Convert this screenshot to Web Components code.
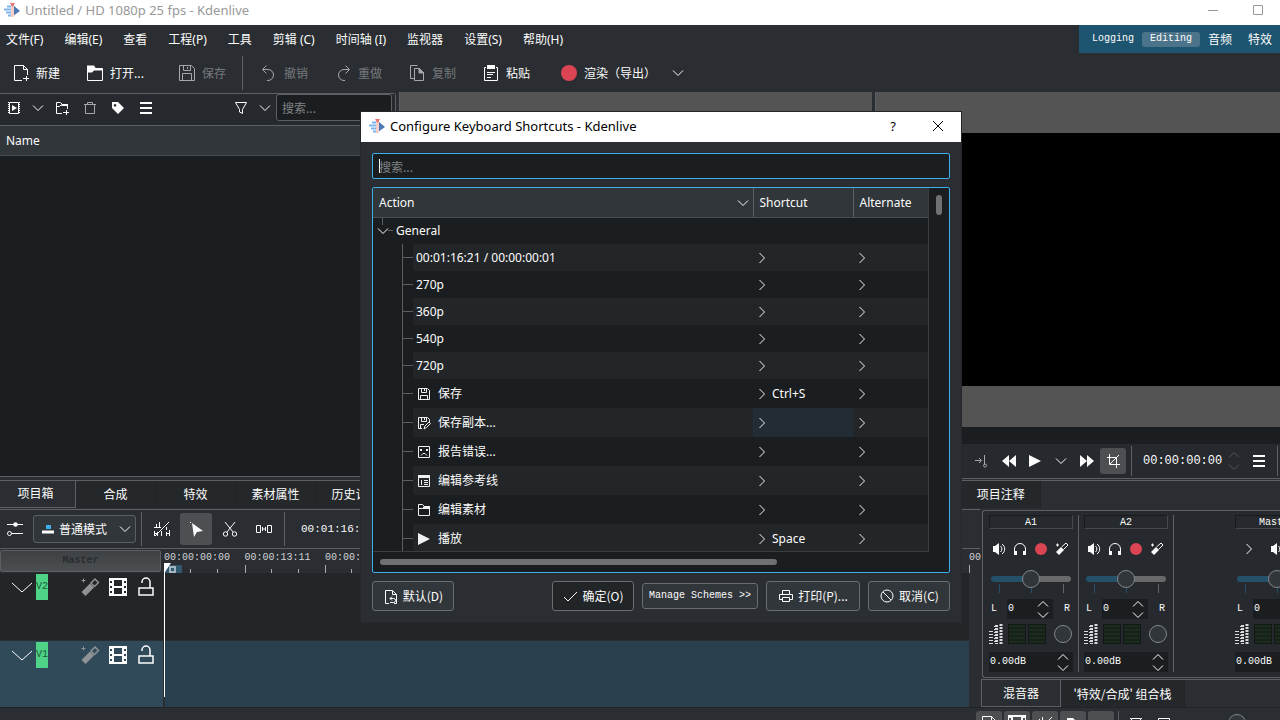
<!DOCTYPE html>
<html lang="zh-CN">
<head>
<meta charset="utf-8">
<title>Untitled / HD 1080p 25 fps - Kdenlive</title>
<style>
    :root {
        --window: #2a2e32;
        --panel: #26292d;
        --view: #1b1e20;
        --alt: #232629;
        --header: #31363b;
        --line: #5c6063;
        --text: #fcfcfc;
        --dim: #76797c;
        --accent: #3daee9;
        --ui: "Noto Sans", "Noto Sans CJK SC", sans-serif;
        --cjk: "Noto Sans CJK SC", sans-serif;
        --mono: "Liberation Mono", "Noto Sans CJK SC", monospace;
    }

    html, body {
        margin: 0;
        height: 100%;
    }

    body {
        overflow: hidden;
        background: var(--window);
        color: var(--text);
        font: 12px/16px var(--ui);
    }
</style>
</head>
<body>
<kd-app></kd-app>

<script>
'use strict';

(function() {
    const icons = {
        app: '<path d="M3 4.500h5M0 7.500h7M2 10.500h6M4 13.500h4" stroke="#7fb4f0" stroke-width="2"/><path d="M9 3l7 6-7 5z" fill="#4a79b5" stroke="none"/><path d="M8.500 4v11" stroke="#f8cdc8" stroke-width="3"/><path d="M6 1h5l-2.500 4z" fill="#ee6f6a" stroke="none"/>',
        newfile: '<path d="M9 15.500H1.500V.500h9l4 4V10M10.500.500v4h4M10 13.500h6M13.500 11v5"/>',
        open: '<path d="M.500 2v13.500h15V3.500H8L6 5.500H.500"/><path d="M0 .500h7l2 3h7v2H7l-2 2H0z" fill="currentColor" stroke="none"/>',
        folderopen: '<path d="M2.500 13.500v-11h4l2 2h5v9zM2.500 6.500h4l2-2"/><path d="M8 4h6v3H6z" fill="currentColor" stroke="none"/>',
        save: '<path d="M.500.500h12l3 3v12H.500zM4.500.500v5h7v-5M8.500 2v2M3.500 15.500v-7h9v7"/>',
        savesmall: '<path d="M2.500 2.500h9l2 2v9h-11zM5.500 2.500v4h5v-4M8.500 3v2M4.500 13.500v-4h7v4"/>',
        savecopy: '<path d="M6 13.500H2.500v-11h9l2 2V7M5.500 2.500v4h5v-4M8.500 3v2M4.500 13.500v-4H8M8 14l1-3 4-4 1.500 1.500-4 4z"/>',
        undo: '<path d="M5.500.500l-4 4 4 4M2 4.500h5a5 5 0 0 1 0 11H6"/>',
        redo: '<path d="M10.500.500l4 4-4 4M14 4.500H9a5 5 0 0 0 0 11h1"/>',
        copy: '<path d="M5 13.500H1.500v-13h7M5.500 3.500h5l4 4v8h-9z"/><path d="M10 3l5 5h-5z" fill="currentColor"/>',
        paste: '<path d="M3 2.500H1.500v13h13v-13H13M4 7.500h8M4 9.500h6M4 12.500h4"/><path d="M4 0h8v4H4z" fill="currentColor" stroke="none"/>',
        record: '<circle cx="8" cy="8" r="8" fill="#da4453" stroke="none"/>',
        recordsmall: '<circle cx="8" cy="8" r="6" fill="#da4453" stroke="none"/>',
        down: '<path d="M3 5.500l5 5 5-5"/>',
        right: '<path d="M5.500 3l5 5-5 5"/>',
        up: '<path d="M3 10.500l5-5 5 5"/>',
        bigdown: '<path d="M-2 4l10 9 10-9"/>',
        clip: '<path d="M3.500 2.500h9v11h-9z"/><path d="M2.500 2v12M13.500 2v12" stroke-dasharray="1 1"/><path d="M6 5l5 3-5 3z" fill="currentColor" stroke="none"/>',
        addclip: '<path d="M8 13.500H2.500v-11h4l2 2h5V9M2.500 6.500h3l2-2M9 12.500h6M12.500 10v5"/><path d="M8 4h6v2H7z" fill="currentColor" stroke="none"/>',
        trash: '<path d="M2 4.500h12M5.500 4.500v-2h5v2M3.500 5v8.500h9V5"/>',
        tag: '<path d="M2 2h6l6 6-6 6-6-6zM5 4a1.300 1.300 0 1 0 .1 0z" fill="currentColor" fill-rule="evenodd" stroke="none"/>',
        menu: '<path d="M2 3h12M2 8h12M2 13h12" stroke-width="2"/>',
        filter: '<path d="M2.500 2.500h11l-4 7v4l-3-1.500V9.500z"/>',
        report: '<path d="M2.500 2.500h11v11h-11zM5 11.500l2-2h2l2 2"/><path d="M4 5h2v2H4zM10 5h2v2h-2z" fill="currentColor" stroke="none"/>',
        guides: '<path d="M2.500 3.500h11v10h-11zM5.500 7v5M8 7.500h4M8 9.500h4M8 11.500h4"/><path d="M2 2h12v3H2z" fill="currentColor" stroke="none"/>',
        play: '<path d="M2 2l12 6-12 6z" fill="currentColor" stroke="none"/>',
        back: '<path d="M8 2v12L1 8zM15 2v12L8 8z" fill="currentColor" stroke="none"/>',
        forward: '<path d="M8 2v12l7-6zM1 2v12l7-6z" fill="currentColor" stroke="none"/>',
        zonein: '<path d="M0 7.500h6M4 5l2.500 2.500L4 10M9.500 2v10"/><circle cx="10" cy="12.500" r="1.500"/>',
        crop: '<path d="M2 4.500h9.500V15M4.500 1v10.500H15M5 11l9-9"/>',
        reset: '<path d="M6 15.500H2.500v-13h7l4 4v9H11M9.500 2.500v4h4M7 10.500h3.500a2 2 0 0 1 0 4H7M9 8.500l-2 2 2 2"/>',
        ok: '<path d="M2 9l4 4 9-9"/>',
        print: '<path d="M4.500 6V2.500h7V6M4 11.500H1.500v-5h13v5H12M4.500 9.500h7v4h-7z"/>',
        cancel: '<circle cx="8" cy="8" r="6"/><path d="M4 4l8 8"/>',
        mix: '<path d="M0 3.500h16M4 12.500h12"/><circle cx="8.500" cy="3.500" r="2.300" fill="currentColor" stroke="none"/><circle cx="2.500" cy="12.500" r="2"/>',
        normal: '<path d="M2 11h12" stroke-width="3"/><path d="M6 4h5v4H6z" fill="#3daee9" stroke="none"/>',
        noripple: '<path d="M0 6.500h7M2.500 7V3M5.500 7V1M.500 15v-5M3.500 15v-4M12.500 6V9M15.500 9v6M12.500 11v4M7.500 10v5M1 15L15 1M0 12.500h4M12 12.500h4"/>',
        select: '<path d="M4 2l11 8-6 1-3 5z" fill="currentColor" stroke="none"/><path d="M2 1.500h1"/>',
        scissors: '<path d="M3 1l8 10M13 1L5 11"/><circle cx="3.500" cy="13" r="2.200"/><circle cx="12.500" cy="13" r="2.200"/>',
        spacer: '<path d="M.500 4.500h4v7h-4zM11.500 4.500h4v7h-4zM6 8h4M6.500 6v4M9.500 6v4"/>',
        wand: '<path d="M-.500 13L8 4.500l4 4L3.500 17z" fill="currentColor" stroke="none"/><path d="M9 4l4-4 3.500 3.500-4 4z" stroke-width="1.500"/><path d="M-.500 1.500h4M1.500-.500v4"/>',
        film: '<path d="M-1-1h18v18H-1zM4 1v6h8V1zM4 9v6h8V9zM0 2v2h2V2zM0 7v2h2V7zM0 12v2h2v-2zM14 2v2h2V2zM14 7v2h2V7zM14 12v2h2v-2z" fill="currentColor" fill-rule="evenodd" stroke="none"/>',
        unlock: '<path d="M1 9h14v7H1zM4 4V3a3.500 3.500 0 0 1 8 0v6" stroke-width="1.500"/>',
        speaker: '<path d="M2 5h2l4-3v12l-4-3H2z" fill="currentColor" stroke="none"/><path d="M9.500 5a4 4 0 0 1 0 6M11 3a6 6 0 0 1 0 10"/>',
        phones: '<path d="M2.500 13V8a5.500 5.500 0 0 1 11 0v5"/><path d="M2 10h3v4H2zM11 10h3v4h-3z" fill="currentColor" stroke="none"/>',
        smallwand: '<path d="M2 11l5-5 3 3-5 5z" fill="currentColor" stroke="none"/><path d="M7.500 6L12 2l2 2-4.500 4.500M2 4h3M3.500 2.500v3"/>',
        minimize: '<path d="M3 8.500h10"/>',
        maximize: '<path d="M3.500 3.500h9v9h-9z"/>',
        close: '<path d="M3 3l10 10M13 3L3 13"/>'
    };

    const base = `
        *, *::before { box-sizing: border-box; }
        button, input, select {
            margin: 0;
            padding: 0;
            border: 0;
            border-radius: 0;
            background: none;
            color: inherit;
            font: inherit;
            outline: none;
        }
        input { min-width: 0; }
        input::placeholder { color: #7f8285; opacity: 1; }
        button { display: flex; align-items: center; justify-content: center; white-space: nowrap; }
    `;

    class KdElement extends HTMLElement {
        constructor() {
            super();
            this.attachShadow({ mode: 'open' });
        }

        connectedCallback() {
            this.shadowRoot.innerHTML = `<style>${base}${this.styles}</style>${this.markup}`;
        }
    }

    class KdIcon extends KdElement {
        get styles() {
            return `
                :host { display: inline-flex; flex: none; width: 16px; height: 16px; }
                svg { width: 16px; height: 16px; fill: none; stroke: currentColor; overflow: visible; }
            `;
        }

        get markup() {
            return `<svg viewBox="0 0 16 16" aria-hidden="true">${icons[this.getAttribute('name')] || ''}</svg>`;
        }
    }

    // one entry of a tool bar: icon plus optional slotted label
    class KdTool extends KdElement {
        get styles() {
            return `
                :host { display: flex; flex: none; }
                :host([disabled]) button { color: var(--dim); }
                :host([disabled]) kd-icon { color: #a5a8aa; }
                button { gap: 7px; }
            `;
        }

        get markup() {
            const label = this.getAttribute('label') || '';
            return `
                <button type="button" ${label ? `aria-label="${label}"` : ''}>
                    <kd-icon name="${this.getAttribute('icon')}"></kd-icon><slot></slot>
                </button>
            `;
        }
    }

    class KdTitleBar extends KdElement {
        get styles() {
            return `
                :host { display: flex; align-items: center; height: 25px; padding: 0 14px 6px 4px; background: #fff; color: #999; font-size: 13px; }
                kd-icon { margin-right: 5px; }
                .buttons { display: flex; gap: 29px; margin-left: auto; }
                .buttons kd-icon { margin: 0; }
            `;
        }

        get markup() {
            return `
                <kd-icon name="app"></kd-icon><slot></slot>
                <div class="buttons">
                    <button type="button" aria-label="最小化"><kd-icon name="minimize"></kd-icon></button>
                    <button type="button" aria-label="最大化"><kd-icon name="maximize"></kd-icon></button>
                </div>
            `;
        }
    }

    class KdMenuBar extends KdElement {
        get styles() {
            return `
                :host { display: flex; justify-content: space-between; height: 29px; }
                nav { display: flex; gap: 21px; padding-left: 6px; }
                .spaces { display: flex; align-items: center; height: 28px; padding: 0 0 0 5px; background: #1d546f; }
                .spaces button { height: 15px; padding: 0 8px; border-radius: 3px; font-family: var(--cjk); }
                .spaces .latin { font: 10px/16px var(--mono); }
                .spaces .active { background: #4b7389; }
            `;
        }

        get markup() {
            const menus = ['文件(F)', '编辑(E)', '查看', '工程(P)', '工具', '剪辑 (C)', '时间轴 (I)', '监视器', '设置(S)', '帮助(H)'];
            return `
                <nav>${menus.map(menu => `<button type="button">${menu}</button>`).join('')}</nav>
                <div class="spaces">
                    <button type="button" class="latin">Logging</button>
                    <button type="button" class="latin active">Editing</button>
                    <button type="button">音频</button>
                    <button type="button">特效</button>
                </div>
            `;
        }
    }

    class KdToolBar extends KdElement {
        get styles() {
            return `
                :host { display: flex; align-items: center; gap: 27px; height: 38px; padding-left: 13px; font-family: var(--cjk); }
                .open { width: 65px; }
                hr { width: 1px; height: 34px; margin: 0 -9px 0 -11px; border: 0; background: var(--line); }
                .render { margin-left: 4px; }
                .more { margin-left: -13px; }
            `;
        }

        get markup() {
            return `
                <kd-tool icon="newfile">新建</kd-tool>
                <kd-tool icon="open" class="open">打开...</kd-tool>
                <kd-tool icon="save" disabled>保存</kd-tool>
                <hr>
                <kd-tool icon="undo" disabled>撤销</kd-tool>
                <kd-tool icon="redo" disabled>重做</kd-tool>
                <kd-tool icon="copy" disabled>复制</kd-tool>
                <kd-tool icon="paste">粘贴</kd-tool>
                <kd-tool icon="record" class="render">渲染（导出）</kd-tool>
                <kd-tool icon="down" label="渲染选项" class="more"></kd-tool>
            `;
        }
    }

    class KdTabs extends KdElement {
        get styles() {
            return `
                :host { display: flex; flex: none; height: 28px; font-family: var(--cjk); }
                button { flex: none; width: 80px; padding-bottom: 2px; border-right: 1px solid #212427; background: #25282b; }
                button.active { width: 76px; padding-right: 4px; border: 1px solid var(--line); border-width: 0 1px 1px 0; background: var(--window); }
                :host([kind="mixer"]) button { width: 124px; padding: 0; }
                :host([kind="mixer"]) button.active { width: 80px; border-left-width: 1px; }
            `;
        }

        get markup() {
            const active = Number(this.getAttribute('active'));
            return this.getAttribute('tabs').split('|').map((tab, i) =>
                `<button type="button" class="${i === active ? 'active' : ''}">${tab}</button>`).join('');
        }
    }

    class KdBin extends KdElement {
        get styles() {
            return `
                :host { display: flex; flex-direction: column; border: 1px solid var(--line); border-left: 0; border-radius: 0 3px 3px 0; }
                .tools { display: flex; align-items: center; height: 32px; padding: 0 3px 4px 6px; background: var(--panel); border-bottom: 1px solid var(--line); }
                .group { display: flex; gap: 8px; margin-right: 12px; }
                .group.wide { gap: 12px; }
                .group.last { margin: 0 3px 0 auto; }
                input { width: 116px; height: 27px; padding: 0 5px; border: 1px solid var(--line); border-radius: 3px; background: var(--view); font-family: var(--cjk); }
                .head { padding: 7px 6px 6px; background: var(--header); border-bottom: 1px solid #4a4e51; }
                .view { flex: 1; background: var(--view); }
            `;
        }

        get markup() {
            return `
                <div class="tools">
                    <div class="group">
                        <kd-tool icon="clip" label="添加素材"></kd-tool>
                        <kd-tool icon="down" label="更多"></kd-tool>
                        <kd-tool icon="addclip" label="新建文件夹"></kd-tool>
                    </div>
                    <div class="group wide">
                        <kd-tool icon="trash" label="删除" disabled></kd-tool>
                        <kd-tool icon="tag" label="标签"></kd-tool>
                        <kd-tool icon="menu" label="选项"></kd-tool>
                    </div>
                    <div class="group last">
                        <kd-tool icon="filter" label="筛选"></kd-tool>
                        <kd-tool icon="down" label="筛选选项"></kd-tool>
                    </div>
                    <input type="text" placeholder="搜索..." aria-label="搜索素材">
                </div>
                <div class="head">Name</div>
                <div class="view"></div>
            `;
        }
    }

    class KdMonitor extends KdElement {
        get styles() {
            return `
                :host { display: flex; flex-direction: column; border-left: 1px solid var(--line); }
                .screen { flex: 1; border: solid #545454; border-width: 41px 0; background: #000; }
                .ruler { height: 17px; background: var(--view); }
                .controls { display: flex; align-items: center; justify-content: flex-end; height: 35px; padding-right: 2px; background: var(--panel); border-bottom: 1px solid var(--line); }
                kd-tool { justify-content: center; width: 26px; }
                .crop { height: 26px; border-radius: 3px; background: #4d5053; }
                hr { width: 1px; height: 30px; margin: 0 0 0 5px; border: 0; background: var(--line); }
                input { width: 79px; margin-left: 11px; font: 12px/16px var(--mono); }
                .spin { display: flex; flex-direction: column; width: 16px; margin: 0 4px; color: #55585b; }
                .spin kd-icon { height: 12px; align-items: center; }
            `;
        }

        get markup() {
            const controls = `
                <kd-tool icon="zonein" label="入点" disabled></kd-tool>
                <kd-tool icon="back" label="后退"></kd-tool>
                <kd-tool icon="play" label="播放"></kd-tool>
                <kd-tool icon="down" label="播放选项"></kd-tool>
                <kd-tool icon="forward" label="前进"></kd-tool>
                <kd-tool icon="crop" label="裁剪" class="crop"></kd-tool>
                <hr>
                <input type="text" value="00:00:00:00" aria-label="时间码">
                <div class="spin"><kd-icon name="up"></kd-icon><kd-icon name="down"></kd-icon></div>
                <kd-tool icon="menu" label="监视器菜单"></kd-tool>
                <hr>
            `;
            return `
                <div class="screen"></div>
                <div class="ruler"></div>
                <div class="controls">${this.hasAttribute('plain') ? '' : controls}</div>
            `;
        }
    }

    class KdTrack extends KdElement {
        get styles() {
            return `
                :host { display: flex; height: 67px; }
                :host([active]) { height: 66px; }
                .head { display: flex; align-items: flex-start; width: 163px; padding: 1px 8px 0 14px; background: var(--alt); }
                .body { flex: 1; margin-left: 2px; background: var(--alt); }
                :host([active]) .head { background: #304a5a; }
                :host([active]) .body { background: #29404e; }
                .tag { width: 12px; height: 26px; margin: 0 34px 0 6px; background: #4fd487; color: #1d5a3b; font: 10px/26px var(--mono); text-align: center; }
                kd-tool { margin-top: 5px; }
                kd-tool + kd-tool { margin-left: 12px; }
                .effects { color: #909395; }
            `;
        }

        get markup() {
            return `
                <div class="head">
                    <kd-tool icon="bigdown" label="折叠轨道"></kd-tool>
                    <div class="tag">${this.getAttribute('name')}</div>
                    <kd-tool icon="wand" label="轨道特效" class="effects"></kd-tool>
                    <kd-tool icon="film" label="隐藏轨道"></kd-tool>
                    <kd-tool icon="unlock" label="锁定轨道"></kd-tool>
                </div>
                <div class="body"></div>
            `;
        }
    }

    class KdTimeline extends KdElement {
        get styles() {
            return `
                :host { display: flex; flex-direction: column; border-top: 1px solid var(--line); }
                .tools { display: flex; align-items: center; height: 39px; padding-left: 7px; border-bottom: 1px solid var(--line); }
                .mode { display: flex; align-items: center; width: 103px; height: 28px; margin: 0 1px 0 10px; padding: 0 2px 0 6px; border: 1px solid var(--line); border-radius: 3px; background: var(--header); font-family: var(--cjk); }
                .mode select { flex: 1; min-width: 0; padding-left: 3px; appearance: none; }
                hr { width: 1px; height: 34px; margin: 0 4px; border: 0; background: var(--line); }
                .edit { display: flex; gap: 2px; }
                .edit kd-tool { width: 32px; height: 32px; justify-content: center; border-radius: 3px; }
                .edit .on { background: #4d5053; }
                .time { width: 96px; margin-left: 12px; font: 11px/16px var(--mono); }
                .top { display: flex; height: 24px; }
                .master { width: 161px; margin: 1px 2px 1px 0; border: 1px solid var(--line); border-radius: 2px; background: linear-gradient(#3d4144, #4b4f52); color: #292c2f; font: bold 10px/16px var(--mono); }
                .ruler { display: grid; grid-template-columns: repeat(10, 1fr) 0; flex: 1; margin: 0 11px 0 1px; font: 10px/18px var(--mono); color: #d0d3d5; }
                .ruler div { white-space: nowrap; background:
                    linear-gradient(#aaa, #aaa) 0 100% / 1px 8px no-repeat,
                    linear-gradient(#aaa, #aaa) 33% 100% / 1px 4px no-repeat,
                    linear-gradient(#aaa, #aaa) 67% 100% / 1px 4px no-repeat; }
                .ruler div:last-child { width: 12px; background: linear-gradient(#aaa, #aaa) 0 100% / 1px 8px no-repeat; }
                .tracks { position: relative; margin-right: 11px; }
                kd-track + kd-track { margin-top: 1px; }
                .playhead { position: absolute; left: 164px; top: -10px; width: 18px; height: 134px; }
            `;
        }

        get markup() {
            const times = ['00:00:00:00', '00:00:13:11', '00:00:26:22', '', '', '', '', '', '', '', '00'];
            return `
                <div class="tools">
                    <kd-tool icon="mix" label="轨道合成"></kd-tool>
                    <label class="mode">
                        <kd-icon name="normal"></kd-icon>
                        <select aria-label="编辑模式"><option>普通模式</option></select>
                        <kd-icon name="down"></kd-icon>
                    </label>
                    <hr>
                    <div class="edit">
                        <kd-tool icon="noripple" label="混合"></kd-tool>
                        <kd-tool icon="select" label="选择工具" class="on"></kd-tool>
                        <kd-tool icon="scissors" label="剃刀工具"></kd-tool>
                        <kd-tool icon="spacer" label="间隔工具"></kd-tool>
                    </div>
                    <hr>
                    <input class="time" type="text" value="00:01:16:21" aria-label="时间线位置">
                </div>
                <div class="top">
                    <button type="button" class="master">Master</button>
                    <div class="ruler">${times.map(time => `<div>${time}</div>`).join('')}</div>
                </div>
                <div class="tracks">
                    <kd-track name="V2"></kd-track>
                    <kd-track name="V1" active></kd-track>
                    <svg class="playhead" viewBox="0 0 18 134" aria-hidden="true">
                        <path d="M1 2h17v8H1z" fill="#31586e"/>
                        <path d="M6 4h5v5H6z" fill="#31586e" stroke="#a4b5bf" stroke-width="2"/>
                        <path d="M0 0h7L1 9v125H0z" fill="#fff"/>
                    </svg>
                </div>
            `;
        }
    }

    class KdStrip extends KdElement {
        get styles() {
            return `
                :host { display: flex; flex: none; flex-direction: column; width: 84px; font: 10px/14px var(--mono); }
                .name { height: 14px; border: 1px solid #45494c; border-top-color: #17191b; border-left-color: #17191b; text-align: center; line-height: 14px; }
                .icons { display: flex; gap: 5px; margin: 12px 0 13px 2px; }
                :host([master]) .icons { gap: 12px; margin-left: 6px; }
                .balance { height: 26px; margin: 0 2px; background:
                    linear-gradient(#245069, #245069) 8px 14px / 1px 9px no-repeat,
                    linear-gradient(#245069, #245069) 40px 14px / 1px 9px no-repeat,
                    linear-gradient(#666, #666) 72px 14px / 1px 9px no-repeat; }
                input[type=range] { display: block; width: 80px; height: 18px; appearance: none; }
                input[type=range]::-webkit-slider-runnable-track { height: 6px; border-radius: 3px; background: linear-gradient(90deg, #245069 50%, #69696b 50%); }
                input[type=range]::-webkit-slider-thumb { width: 18px; height: 18px; margin-top: -6px; appearance: none; border: 1px solid #83868a; border-radius: 50%; background: var(--header); }
                .row { display: flex; align-items: center; }
                .pan { height: 20px; margin: 3px 2px 0; }
                .spin { display: flex; align-items: center; height: 20px; background: var(--view); }
                .spin input { flex: 1; padding-left: 1px; }
                .pan .spin { width: 46px; margin: 0 11px 0 10px; }
                .arrows { display: flex; flex-direction: column; width: 20px; align-items: center; }
                .arrows kd-icon { height: 11px; align-items: center; }
                .meter { gap: 2px; height: 22px; margin: 4px 0 7px; }
                .scale { width: 17px; height: 20px; }
                .bar { width: 18px; height: 20px; border: 1px solid #141617; background: repeating-linear-gradient(#1a2c1c 0 2px, #17201a 2px 4px); }
                .knob { width: 18px; height: 18px; margin-left: 6px; border: 1px solid #83868a; border-radius: 50%; background: var(--header); }
            `;
        }

        get markup() {
            const tools = this.hasAttribute('master') ? ['right', 'speaker'] : ['speaker', 'phones', 'recordsmall', 'smallwand'];
            const arrows = '<span class="arrows"><kd-icon name="up"></kd-icon><kd-icon name="down"></kd-icon></span>';
            return `
                <div class="name">${this.getAttribute('name')}</div>
                <div class="icons">
                    ${tools.map(tool => `<kd-tool icon="${tool}" label="${tool}"></kd-tool>`).join('')}
                </div>
                <div class="balance"><input type="range" aria-label="平衡"></div>
                <div class="row pan">
                    <span>L</span>
                    <div class="spin"><input type="text" value="0" aria-label="声像">${arrows}</div>
                    <span>R</span>
                </div>
                <div class="row meter">
                    <svg class="scale" viewBox="0 0 17 20" fill="none" stroke="#d8dadb" aria-hidden="true">
                        <path d="M0 7.500h4M0 10.500h4M0 13.500h4M0 16.500h4M0 19.500h4M5 2.500h4M5 5.500h3M5 8.500h4M5 11.500h4M5 14.500h3M5 17.500h4"/>
                        <path d="M7.500 1v19M12 0v20" stroke-width="3" stroke-dasharray="2 1"/>
                    </svg>
                    <div class="bar"></div><div class="bar"></div><div class="knob"></div>
                </div>
                <div class="spin"><input type="text" value="0.00dB" aria-label="音量">${arrows}</div>
            `;
        }
    }

    class KdMixer extends KdElement {
        get styles() {
            return `
                :host { display: flex; flex-direction: column; gap: 1px; padding-top: 1px; overflow: hidden; }
                .strips { display: flex; height: 168px; margin-left: 2px; padding: 4px 0 5px 6px; overflow: hidden; border: 1px solid var(--line); border-right: 0; border-radius: 3px 0 0 3px; background: var(--panel); }
                hr { flex: none; width: 1px; margin: 0 5px; border: 0; background: var(--line); }
                .space { flex: none; width: 56px; }
                kd-tabs { margin-left: 1px; border-top: 1px solid var(--line); }
            `;
        }

        get markup() {
            return `
                <div class="strips">
                    <kd-strip name="A1"></kd-strip><hr>
                    <kd-strip name="A2"></kd-strip><hr>
                    <div class="space"></div>
                    <kd-strip name="Master" master></kd-strip>
                </div>
                <kd-tabs kind="mixer" active="0" tabs="混音器|'特效/合成' 组合栈"></kd-tabs>
            `;
        }
    }

    class KdFooter extends KdElement {
        get styles() {
            return `
                :host { display: flex; justify-content: flex-end; height: 13px; overflow: hidden; border-top: 1px solid #212427; }
                .tools { display: flex; gap: 2px; width: 304px; padding-top: 3px; }
                .tools kd-tool { width: 26px; height: 26px; justify-content: center; border-radius: 3px; background: #4d5053; }
                .tools .flat { background: none; }
                hr { width: 1px; height: 26px; margin: 0 2px; border: 0; background: var(--line); }
                .knob { width: 18px; height: 18px; margin: 3px 0 0 49px; border: 1px solid #83868a; border-radius: 50%; background: var(--header); }
            `;
        }

        get markup() {
            return `
                <div class="tools">
                    <kd-tool icon="newfile" label="特效"></kd-tool>
                    <kd-tool icon="film" label="视频"></kd-tool>
                    <kd-tool icon="noripple" label="音频"></kd-tool>
                    <kd-tool icon="tag" label="标签"></kd-tool>
                    <kd-tool icon="normal" label="轨道"></kd-tool>
                    <hr>
                    <kd-tool icon="clip" label="对比" class="flat"></kd-tool>
                    <kd-tool icon="report" label="启用" class="flat"></kd-tool>
                    <div class="knob"></div>
                </div>
            `;
        }
    }

    class KdShortcutTable extends KdElement {
        get styles() {
            return `
                :host { display: grid; grid-template: 1fr 20px / 1fr 20px; border: 1px solid var(--accent); border-radius: 2px; background: var(--view); }
                .clip { overflow: hidden; border: 1px solid #3a3e41; border-width: 0 1px 1px 0; }
                table { width: 100%; border-collapse: collapse; table-layout: fixed; }
                col.shortcut { width: 100px; }
                col.alternate { width: 75px; }
                th, td { padding: 0; font-weight: normal; text-align: left; }
                th { height: 29px; padding: 2px 0 0 6px; background: var(--header); border-bottom: 1px solid #4a4e51; }
                th + th { border-left: 1px solid var(--line); }
                th span { display: flex; justify-content: space-between; padding-right: 2px; }
                td { height: 27px; }
                tr.tall td { height: 29px; }
                td div { display: flex; align-items: center; height: 100%; }
                tr { height: 27px; }
                tr.tall { height: 29px; }
                tr.alt td { background: var(--alt); }
                tr.alt td:first-child { background: linear-gradient(90deg, var(--view) 40px, var(--alt) 40px); }
                .leaf td:first-child div { gap: 6px; padding-left: 43px; background:
                    linear-gradient(var(--line), var(--line)) 29px 0 / 1px 100% no-repeat,
                    linear-gradient(var(--line), var(--line)) 30px 50% / 10px 1px no-repeat; }
                .leaf kd-icon { color: #eff0f1; }
                td + td div { gap: 2px; padding-left: 1px; }
                td + td kd-icon { color: #d8dadb; }
                .group div { gap: 5px; padding-left: 2px; background:
                    linear-gradient(var(--line), var(--line)) 9px 0 / 1px 7px no-repeat,
                    linear-gradient(var(--line), var(--line)) 15px 50% / 5px 1px no-repeat; }
                td.selected, tr.alt td.selected { background: #222c35; }
                .vertical, .horizontal { padding: 7px 0 0 7px; }
                .vertical::before { content: ""; display: block; width: 6px; height: 20px; border-radius: 3px; background: #707173; }
                .horizontal::before { content: ""; display: block; width: 397px; height: 6px; border-radius: 3px; background: #707173; }
            `;
        }

        get markup() {
            const rows = [
                ['', '00:01:16:21 / 00:00:00:01', ''],
                ['', '270p', ''],
                ['', '360p', ''],
                ['', '540p', ''],
                ['', '720p', ''],
                ['savesmall', '保存', 'Ctrl+S'],
                ['savecopy', '保存副本...', ''],
                ['report', '报告错误...', ''],
                ['guides', '编辑参考线', ''],
                ['folderopen', '编辑素材', ''],
                ['play', '播放', 'Space']
            ];
            return `
                <div class="clip">
                    <table>
                        <colgroup><col><col class="shortcut"><col class="alternate"></colgroup>
                        <thead>
                            <tr><th><span>Action<kd-icon name="down"></kd-icon></span></th><th>Shortcut</th><th>Alternate</th></tr>
                        </thead>
                        <tbody>
                            <tr class="group"><td colspan="3"><div><kd-icon name="down"></kd-icon>General</div></td></tr>
                            ${rows.map(([icon, action, shortcut], i) => `
                                <tr class="leaf ${icon ? 'tall' : ''} ${i % 2 ? '' : 'alt'}">
                                    <td><div>${icon ? `<kd-icon name="${icon}"></kd-icon>` : ''}${action}</div></td>
                                    <td class="${i === 6 ? 'selected' : ''}"><div><kd-icon name="right"></kd-icon>${shortcut}</div></td>
                                    <td><div><kd-icon name="right"></kd-icon></div></td>
                                </tr>
                            `).join('')}
                        </tbody>
                    </table>
                </div>
                <div class="vertical"></div>
                <div class="horizontal"></div>
            `;
        }
    }

    class KdDialog extends KdElement {
        get styles() {
            return `
                :host { display: flex; flex-direction: column; width: 600px; height: 510px; background: var(--window); box-shadow: 0 0 0 1px #25282b; }
                header { display: flex; align-items: center; height: 30px; padding: 0 15px 2px 8px; background: #fff; color: #000; font-size: 13px; }
                header kd-icon { margin-right: 5px; }
                header button { width: 16px; }
                header .help { margin: 0 29px 0 auto; }
                header button kd-icon { margin: 0; }
                .content { display: flex; flex: 1; flex-direction: column; padding: 11px; min-height: 0; }
                .search { height: 26px; margin-bottom: 8px; padding: 0 6px; border: 1px solid var(--accent); border-radius: 2px; background: linear-gradient(#fff, #fff) 6px 50% / 1px 14px no-repeat var(--view); font-family: var(--cjk); }
                kd-shortcut-table { flex: 1; min-height: 0; }
                footer { display: flex; align-items: center; gap: 8px; margin-top: 8px; font-family: var(--cjk); }
                footer button { gap: 4px; width: 82px; height: 30px; border: 1px solid #6a6e71; border-radius: 3px; background: var(--header); }
                footer .first { margin-right: auto; }
                footer .default { background: #212528; }
                footer .schemes { width: 116px; height: 26px; font: 10px/16px var(--mono); }
                footer .print { width: 94px; }
            `;
        }

        get markup() {
            return `
                <header>
                    <kd-icon name="app"></kd-icon><slot></slot>
                    <button type="button" class="help">?</button>
                    <button type="button" aria-label="关闭"><kd-icon name="close"></kd-icon></button>
                </header>
                <div class="content">
                    <input class="search" type="text" placeholder="搜索..." aria-label="搜索快捷键">
                    <kd-shortcut-table></kd-shortcut-table>
                    <footer>
                        <button type="button" class="first"><kd-icon name="reset"></kd-icon>默认(D)</button>
                        <button type="button" class="default"><kd-icon name="ok"></kd-icon>确定(O)</button>
                        <button type="button" class="schemes">Manage Schemes &gt;&gt;</button>
                        <button type="button" class="print"><kd-icon name="print"></kd-icon>打印(P)...</button>
                        <button type="button"><kd-icon name="cancel"></kd-icon>取消(C)</button>
                    </footer>
                </div>
            `;
        }
    }

    class KdApp extends KdElement {
        get styles() {
            return `
                :host { position: relative; display: flex; flex-direction: column; height: 100%; }
                .upper { display: flex; flex: 1; min-height: 0; }
                .left { display: flex; flex-direction: column; width: 396px; padding-top: 1px; }
                .left kd-bin { flex: 1; }
                .left kd-tabs { overflow: hidden; margin: 3px 0 1px; border-top: 1px solid var(--line); }
                .clip { flex: 7; margin: 0 3px; }
                .right { display: flex; flex: 6; flex-direction: column; }
                .right kd-monitor { flex: 1; }
                .right kd-tabs { margin: 1px 0; padding-left: 86px; border-top: 1px solid var(--line); }
                .lower { display: flex; }
                kd-timeline { flex: 1; min-width: 0; }
                kd-mixer { width: 300px; }
                kd-dialog { position: absolute; left: 361px; top: 112px; }
            `;
        }

        get markup() {
            return `
                <kd-title-bar>Untitled / HD 1080p 25 fps - Kdenlive</kd-title-bar>
                <kd-menu-bar></kd-menu-bar>
                <kd-tool-bar></kd-tool-bar>
                <div class="upper">
                    <div class="left">
                        <kd-bin></kd-bin>
                        <kd-tabs active="0" tabs="项目箱|合成|特效|素材属性|历史记录"></kd-tabs>
                    </div>
                    <kd-monitor class="clip" plain></kd-monitor>
                    <div class="right">
                        <kd-monitor></kd-monitor>
                        <kd-tabs active="-1" tabs="项目注释"></kd-tabs>
                    </div>
                </div>
                <div class="lower">
                    <kd-timeline></kd-timeline>
                    <kd-mixer></kd-mixer>
                </div>
                <kd-footer></kd-footer>
                <kd-dialog>Configure Keyboard Shortcuts - Kdenlive</kd-dialog>
            `;
        }
    }

    customElements.define('kd-icon', KdIcon);
    customElements.define('kd-tool', KdTool);
    customElements.define('kd-title-bar', KdTitleBar);
    customElements.define('kd-menu-bar', KdMenuBar);
    customElements.define('kd-tool-bar', KdToolBar);
    customElements.define('kd-tabs', KdTabs);
    customElements.define('kd-bin', KdBin);
    customElements.define('kd-monitor', KdMonitor);
    customElements.define('kd-track', KdTrack);
    customElements.define('kd-timeline', KdTimeline);
    customElements.define('kd-strip', KdStrip);
    customElements.define('kd-mixer', KdMixer);
    customElements.define('kd-footer', KdFooter);
    customElements.define('kd-shortcut-table', KdShortcutTable);
    customElements.define('kd-dialog', KdDialog);
    customElements.define('kd-app', KdApp);
})();
</script>
</body>
</html>
